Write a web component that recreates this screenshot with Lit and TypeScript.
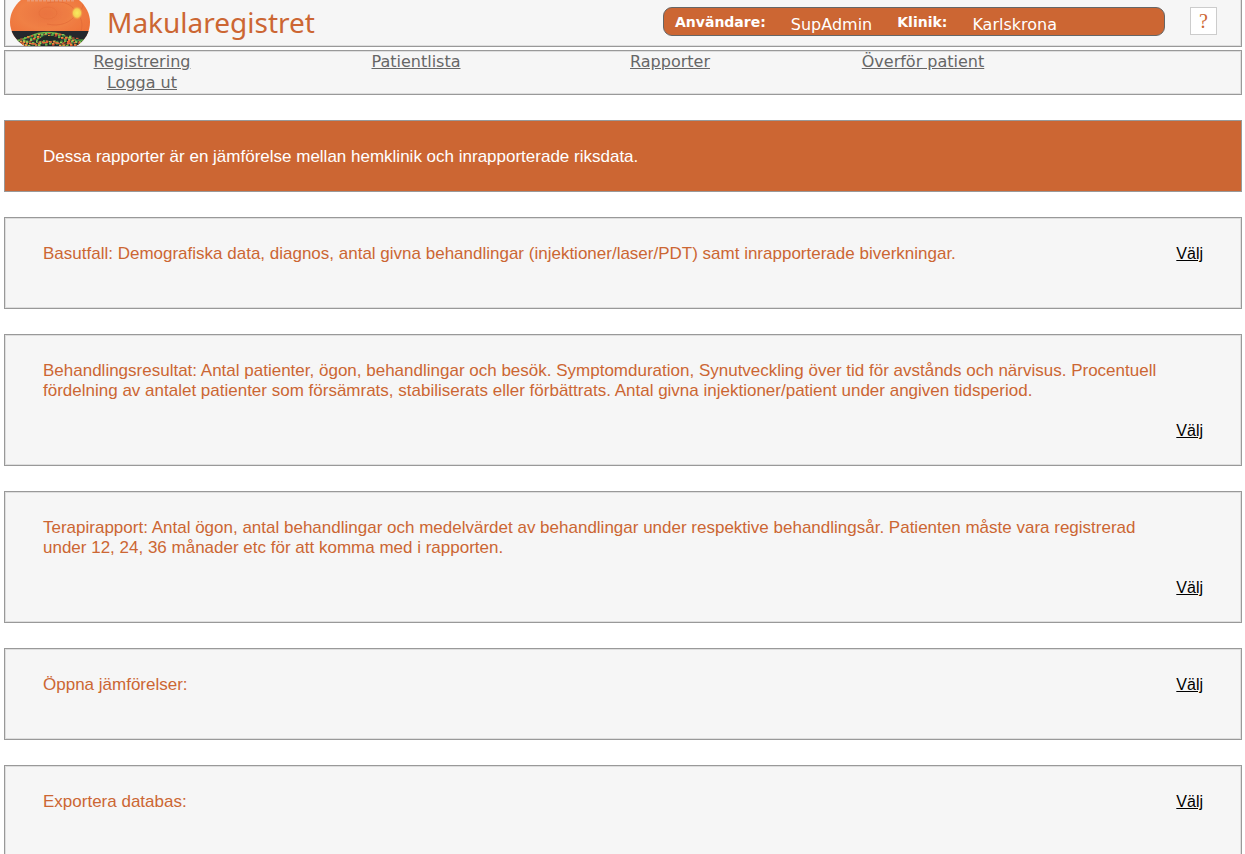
import { LitElement, html, css, svg } from "lit";
import { customElement } from "lit/decorators.js";

const menu = ["Registrering", "Patientlista", "Rapporter", "Överför patient", "Logga ut"];

const reports = [
  "Basutfall: Demografiska data, diagnos, antal givna behandlingar (injektioner/laser/PDT) samt inrapporterade biverkningar.",
  "Behandlingsresultat: Antal patienter, ögon, behandlingar och besök. Symptomduration, Synutveckling över tid för avstånds och närvisus. Procentuell fördelning av antalet patienter som försämrats, stabiliserats eller förbättrats. Antal givna injektioner/patient under angiven tidsperiod.",
  "Terapirapport: Antal ögon, antal behandlingar och medelvärdet av behandlingar under respektive behandlingsår. Patienten måste vara registrerad under 12, 24, 36 månader etc för att komma med i rapporten.",
  "Öppna jämförelser:",
  "Exportera databas:",
];

// Speckles of the retinal layer scan along the bottom of the logo.
const specks = Array.from({ length: 210 }, (_, i) => {
  const x = 4 + ((i * 31) % 73);
  const crest = 33 + Math.pow((x - 40) / 14, 2) * 1.3;
  const y = Math.min(crest, 40) + ((i * 13) % 12);
  const fill = ["#6dbb48", "#ea5a32", "#3a8a48", "#f09a40", "#9ccc5a", "#2c4a36"][(i * 7 + (i >> 3)) % 6];
  return svg`<rect x=${x} y=${y} width="2.4" height="1.5" fill=${fill} />`;
});

const logo = svg`
  <svg class="logo" viewBox="0 0 82 46" aria-hidden="true">
    <defs>
      <radialGradient id="eye" cx="45%" cy="30%" r="65%">
        <stop offset="0" stop-color="#ea7440" />
        <stop offset="0.5" stop-color="#f08045" />
        <stop offset="1" stop-color="#ee7038" />
      </radialGradient>
      <radialGradient id="disc">
        <stop offset="0" stop-color="#f6ec60" />
        <stop offset="0.6" stop-color="#f5d253" />
        <stop offset="1" stop-color="#f08a42" stop-opacity="0" />
      </radialGradient>
      <clipPath id="oval"><path d="M12 0H70C77 6 81 14 81 22C81 32 76 41 67 46H16C7 41 1 32 1 22C1 14 5 6 12 0Z" /></clipPath>
    </defs>
    <g clip-path="url(#oval)">
      <rect width="82" height="46" fill="url(#eye)" />
      <g fill="none" stroke="#de6535" stroke-width="0.8" opacity="0.7">
        <path d="M68 13C62 2 50 0 38 3M68 13C62 23 51 27 38 24M68 13C73 18 74 25 72 31M70 12C74 8 75 4 73 0" />
        <ellipse cx="39" cy="13" rx="9" ry="6" opacity="0.5" />
      </g>
      <ellipse cx="68" cy="13" rx="6" ry="7" fill="url(#disc)" />
      <path d="M18 0.5H66" stroke="#e9a68a" stroke-width="2" stroke-dasharray="3 1" opacity="0.7" />
      <rect y="31" width="82" height="16" fill="#25282d" />
      <path d="M3 41C16 41 20 35 29 33.5C37 32 46 32 54 35C61 39 66 41 79 40" fill="none" stroke="#67b244" stroke-width="1.3" />
      ${specks}
      <path d="M28 42C31 37 35 35 39 36C46 35 50 38 53 42L48 40L42 41L34 40Z" fill="#202a29" />
      <path d="M10 43L26 44L40 42L55 44L71 42" fill="none" stroke="#e5683a" stroke-width="1.5" stroke-dasharray="5 2 2 3" />
    </g>
  </svg>`;

@customElement("app-root")
export class AppRoot extends LitElement {
  static styles = css`
    :host {
      display: block;
      padding: 0 3px 0 4px;
      background: #fff;
      color: #cc6633;
      font: 17px/20px "Liberation Sans", Arial, sans-serif;
    }
    .panel {
      border: 1px solid #999;
      background: #f6f6f6;
      box-shadow: inset 0 0 0 1px #dedede;
    }
    .top {
      display: flex;
      align-items: flex-start;
      border-top: 0;
      padding-right: 24px;
      box-shadow: inset 1px 0 #dedede, inset -1px -1px #dedede;
    }
    .logo {
      display: block;
      flex: none;
      width: 82px;
      height: 46px;
      margin-left: 4px;
    }
    .title {
      margin: 3px auto 0 16px;
      font: 28px/38px "Noto Sans", sans-serif;
    }
    .user {
      box-sizing: border-box;
      display: flex;
      align-items: flex-start;
      width: 502px;
      margin: 7px 25px 0 0;
      padding: 6px 11px 0;
      border: 1px solid #666;
      border-radius: 9px;
      background: #cc6633;
      color: #fff;
      font: 16px/21px "DejaVu Sans", Verdana, sans-serif;
    }
    .user dt {
      font-size: 14px;
      font-weight: bold;
      line-height: 16px;
    }
    .user dd {
      margin: 0 25px;
    }
    .help {
      box-sizing: border-box;
      width: 27px;
      height: 28px;
      margin: 7px 0 0;
      padding: 0;
      border: 1px solid #ccc;
      background: #fff;
      color: #cc6633;
      font: 20px/24px "Liberation Serif", serif;
    }
    .menu {
      display: grid;
      grid-template-columns: 274fr 274fr 234fr 272fr 182fr;
      margin: 3px 0 0;
      padding: 0 0 1px;
      list-style: none;
      text-align: center;
      font: 16px/21px "DejaVu Sans", Verdana, sans-serif;
    }
    .menu li:nth-child(5) {
      grid-column: 1;
    }
    .menu a {
      color: #666;
    }
    .intro {
      margin: 25px 0;
      padding: 26px 38px 24px;
      background: #cc6633;
      box-shadow: none;
      color: #fff;
    }
    .report {
      display: flex;
      flex-wrap: wrap;
      margin-bottom: 25px;
      padding: 26px 38px 24px;
    }
    .report p {
      margin: 0 0 20px;
      padding-right: 32px;
    }
    .report a {
      margin-left: auto;
      color: #000;
      font-size: 16px;
    }
  `;

  render() {
    return html`
      <header class="panel top">
        ${logo}
        <h1 class="title">Makularegistret</h1>
        <dl class="user">
          <dt>Användare:</dt>
          <dd>SupAdmin</dd>
          <dt>Klinik:</dt>
          <dd>Karlskrona</dd>
        </dl>
        <button class="help" type="button">?</button>
      </header>
      <nav>
        <ul class="panel menu">
          ${menu.map((item) => html`<li><a href="#">${item}</a></li>`)}
        </ul>
      </nav>
      <main>
        <p class="panel intro">Dessa rapporter är en jämförelse mellan hemklinik och inrapporterade riksdata.</p>
        ${reports.map((text) => html`<section class="panel report"><p>${text}</p><a href="#">Välj</a></section>`)}
      </main>
    `;
  }
}
